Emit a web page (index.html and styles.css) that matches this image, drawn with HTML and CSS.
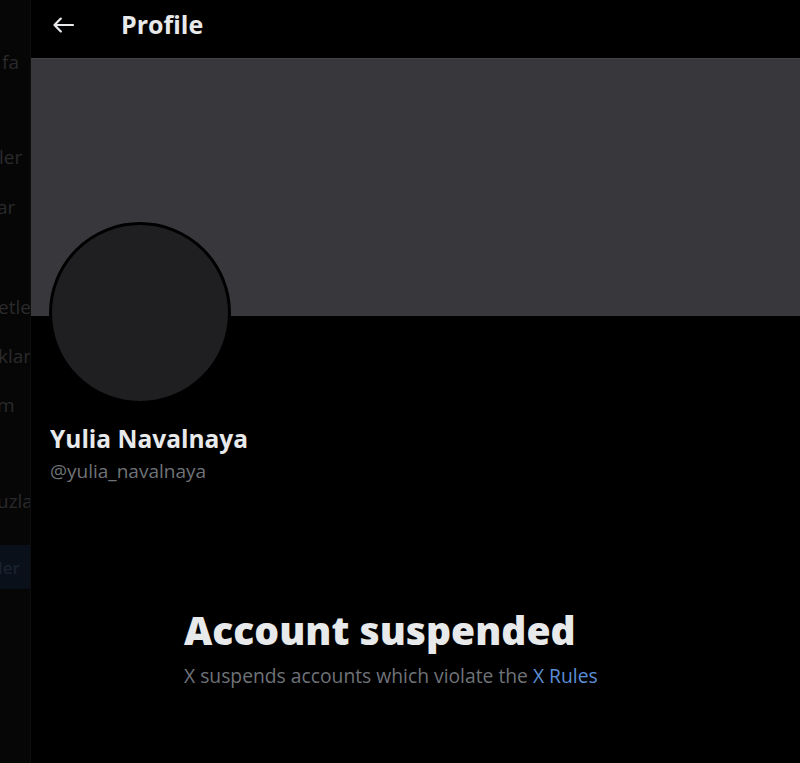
FILE: index.html
```html
<!DOCTYPE html>
<html lang="en">
<head>
<meta charset="utf-8">
<title>Profile</title>
<link rel="stylesheet" href="styles.css">
</head>
<body>
<div class="app">
  <nav class="sidebar">
    <ul class="nav-list">
      <li class="nav-item"><span class="frag f-fa">fa</span></li>
      <li class="nav-item"><span class="frag"></span></li>
      <li class="nav-item"><span class="frag f-ler">ler</span></li>
      <li class="nav-item"><span class="frag f-ar">ar</span></li>
      <li class="nav-item"><span class="frag"></span></li>
      <li class="nav-item"><span class="frag f-etle">etle</span></li>
      <li class="nav-item"><span class="frag f-klar">klar</span></li>
      <li class="nav-item"><span class="frag f-m">m</span></li>
      <li class="nav-item"><span class="frag"></span></li>
      <li class="nav-item"><span class="frag f-uzla">uzla</span></li>
    </ul>
    <div class="post-btn"><span>ler</span></div>
  </nav>
  <main class="main">
    <header class="topbar">
      <button class="back" aria-label="Back">
        <svg viewBox="0 0 22 22" width="22" height="22"><path d="M2.5 11H21M8.8 4.6L2.5 11l6.3 6.4" fill="none" stroke="#e7e9ea" stroke-width="2.2" stroke-linecap="round" stroke-linejoin="round"/></svg>
      </button>
      <h1 class="title">Profile</h1>
    </header>
    <div class="banner"></div>
    <section class="profile">
      <div class="avatar"></div>
      <div class="name">Yulia Navalnaya</div>
      <div class="handle">@yulia_navalnaya</div>
    </section>
    <section class="suspended">
      <h2 class="s-title">Account suspended</h2>
      <p class="s-text">X suspends accounts which violate the <a class="rules" href="#">X Rules</a></p>
    </section>
  </main>
</div>
</body>
</html>
```

FILE: styles.css
```css
* { box-sizing: border-box; }
html, body { margin: 0; padding: 0; background: #000; }
body {
  font-family: "Open Sans", "Liberation Sans", sans-serif;
  color: #e7e9ea;
  width: 800px;
  height: 763px;
  overflow: hidden;
}
.app {
  display: flex;
  height: 763px;
}
.sidebar {
  width: 31px;
  flex: 0 0 31px;
  background: #060606;
  overflow: hidden;
  border-right: 1px solid #0e0e0e;
  padding-top: 50px;
}
.nav-list {
  list-style: none;
  margin: 0;
  padding: 0;
}
.nav-item {
  height: 49px;
  display: flex;
  align-items: flex-start;
  white-space: nowrap;
}
.frag {
  font-size: 19px;
  line-height: 24px;
  color: #2a2a2c;
}
.f-fa { padding-left: 2px; }
.f-ler { margin-left: -1px; margin-top: -3px; }
.f-ar { margin-left: -3px; margin-top: -2px; }
.f-etle { margin-left: -2px; }
.f-klar { margin-left: -2px; }
.f-m { margin-left: -3px; }
.f-uzla { margin-left: -3px; margin-top: -2px; }
.post-btn {
  margin-top: 5px;
  height: 44px;
  background: #0a1019;
  display: flex;
  align-items: center;
  overflow: hidden;
}
.post-btn span {
  font-size: 17px;
  color: #18222f;
  margin-left: -2px;
  font-weight: 600;
}
.main {
  flex: 1;
  display: flex;
  flex-direction: column;
  min-width: 0;
}
.topbar {
  height: 58px;
  display: flex;
  align-items: flex-start;
  padding-left: 21px;
  padding-top: 9px;
}
.back {
  background: none;
  border: 0;
  padding: 0;
  width: 22px;
  height: 22px;
  margin-top: 5px;
  margin-right: 47px;
  display: block;
}
.back svg { display: block; }
.title {
  margin: 0;
  font-size: 25px;
  line-height: 30px;
  font-weight: 700;
  color: #e7e9ea;
}
.banner {
  height: 258px;
  background: #38383c;
  border-top: 1px solid #444448;
}
.profile {
  position: relative;
  padding-left: 19px;
  padding-top: 108px;
}
.avatar {
  position: absolute;
  left: 18px;
  top: -94px;
  width: 182px;
  height: 182px;
  border-radius: 50%;
  background: #1f1f22;
  border: 3px solid #000;
}
.name {
  font-size: 24.5px;
  font-weight: 700;
  line-height: 30px;
  color: #e7e9ea;
}
.handle {
  font-size: 19px;
  line-height: 22px;
  color: #6f7378;
  margin-top: 6px;
}
.suspended {
  padding-left: 153px;
  padding-top: 125px;
}
.s-title {
  margin: 0;
  font-size: 39px;
  font-weight: 800;
  line-height: 46px;
  color: #e7e9ea;
}
.s-text {
  margin: 11px 0 0;
  font-size: 19.3px;
  line-height: 24px;
  color: #6f7378;
}
.rules {
  color: #5b8fd6;
  text-decoration: none;
}
```
